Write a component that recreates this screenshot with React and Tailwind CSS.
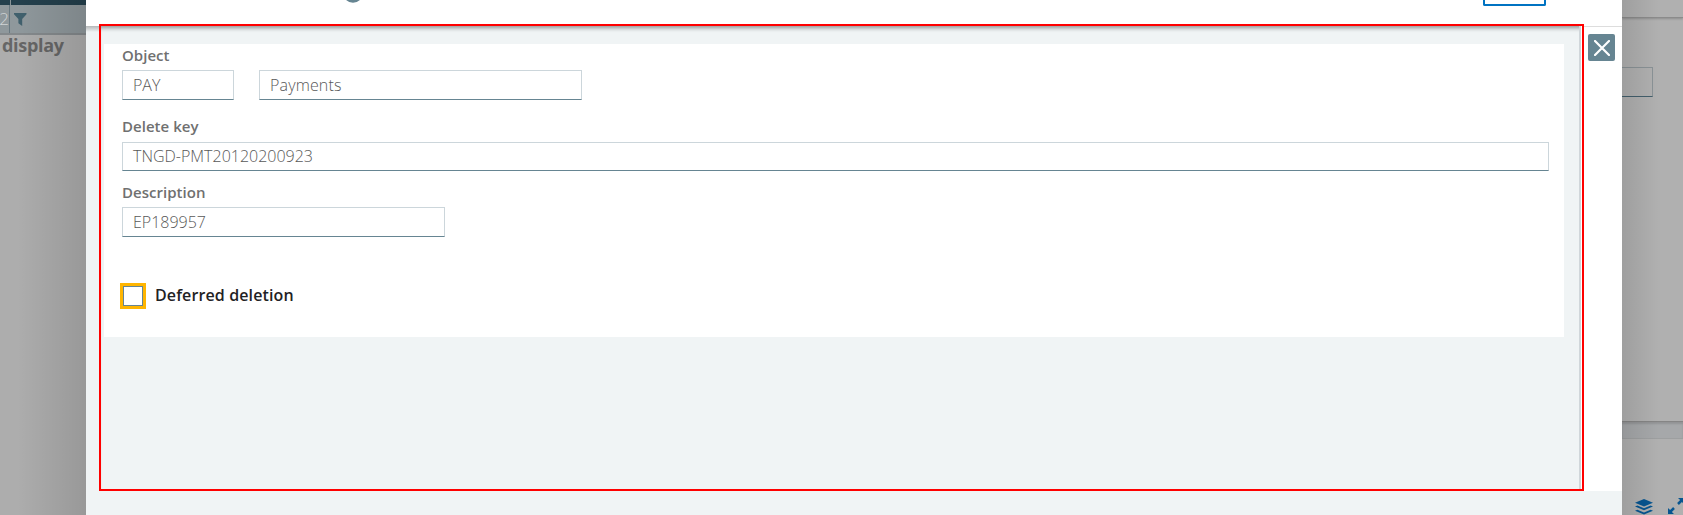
import React from "react";

function Field({ value, className }) {
  return (
    <div className={`flex items-center border border-[#ccd6db] border-b-[#668592] bg-white pl-[10px] text-[16px] font-light leading-none text-[#585858] ${className}`}>
      {value}
    </div>
  );
}

function Label({ children, className }) {
  return <div className={`h-5 text-[15px] font-semibold leading-5 tracking-[0.03px] text-[#707070] ${className}`}>{children}</div>;
}

function LeftBackdrop() {
  return (
    <div className="relative flex w-[86px] shrink-0 flex-col overflow-hidden bg-[#adadad]">
      <div className="flex h-[5px] bg-[#24404d]">
        <div className="ml-[10px] w-px bg-[#8a9599]" />
      </div>
      <div className="flex h-[30px] items-start border-b-2 border-[#84898c] bg-[#8f989c]">
        <div className="flex h-[28px] w-[10px] items-center justify-end overflow-hidden border-r border-[#687880] text-[17px] font-light text-[#d0d4d6]">2</div>
        <svg className="ml-1 mt-2 h-[13px] w-[13px]" viewBox="0 0 13 13">
          <path d="M0 0h12.5v1.3L8.2 6v7L4.4 10.3V6L0 1.3z" fill="#40606d" />
        </svg>
      </div>
      <div className="h-6 pl-0.5 text-[18px] font-bold leading-[20px] tracking-[-0.3px] text-[#666]">display</div>
      <div className="absolute inset-0 bg-gradient-to-r from-transparent from-20% to-black/12" />
    </div>
  );
}

function RightBackdrop() {
  return (
    <div className="relative flex w-[61px] shrink-0 flex-col overflow-hidden bg-[#b0b0b0]">
      <div className="h-[18px] border-b border-[#8b8b8b] shadow-[0_1px_2px_rgba(0,0,0,0.2)]" />
      <div className="mt-[49px] h-[30px] w-[31px] border border-l-0 border-[#8a9296] border-b-[#435f6c]" />
      <div className="mt-[324px] h-[18px] border-y border-t-[#858585] border-b-[#9d9fa0] bg-[#a6a8aa] shadow-[inset_0_2px_2px_rgba(0,0,0,0.12)]" />
      <div className="mt-[60px] flex pl-[13px]">
        <svg className="h-4 w-[18px] shrink-0" viewBox="0 0 18 16" fill="#075590">
          <path d="M9 0l9 3.7-9 3.7-9-3.7z" />
          <path d="M2.4 6.5L9 9.2l6.6-2.7L18 7.5l-9 3.7-9-3.7z" />
          <path d="M2.4 10.7L9 13.4l6.6-2.7L18 11.7l-9 3.7-9-3.7z" />
        </svg>
        <svg className="-mt-px ml-[15px] h-4 w-4 shrink-0" viewBox="0 0 16 16" fill="#075590">
          <path d="M10 0h6v6l-2.1-2.1-3 3-1.8-1.8 3-3zM0 10l2.1 2.1 3-3 1.8 1.8-3 3L6 16H0z" />
        </svg>
      </div>
      <div className="absolute inset-0 bg-gradient-to-l from-transparent from-40% to-black/10" />
    </div>
  );
}

export default function App() {
  return (
    <div className="flex h-[515px] w-[1683px] overflow-hidden font-['Open_Sans',sans-serif]">
      <LeftBackdrop />
      <main className="relative flex w-[1536px] shrink-0 flex-col bg-[#f0f4f5]">
        <header className="flex h-[26px] shrink-0 justify-between bg-white pl-[258px] pr-[76px]">
          <svg className="h-[3px] w-[18px]" viewBox="0 0 18 3">
            <circle cx="9" cy="-7.6" r="9" fill="none" stroke="#668592" strokeWidth="2.6" />
          </svg>
          <div className="h-[6px] w-[63px] rounded-b-[2px] border-2 border-t-0 border-[#0073c2]" />
        </header>
        <div className="relative -mt-0.5 flex h-[467px] shrink-0">
          <div className="mt-0.5 h-1.5 w-[13px] shrink-0 bg-gradient-to-b from-[#b4b7b8] to-[#f0f4f5]" />
          <section className="relative w-[1485px] shrink-0 border-2 border-[#f00] pl-[3px] pt-[18px] shadow-[inset_0_5px_4px_-3px_rgba(0,0,0,0.4)]">
            <div className="h-[293px] w-[1460px] bg-white pl-[18px] pt-px">
              <Label>Object</Label>
              <div className="mt-[5px] flex gap-[25px]">
                <Field value="PAY" className="h-[30px] w-[112px]" />
                <Field value="Payments" className="h-[30px] w-[323px] tracking-[0.15px]" />
              </div>
              <Label className="mt-4">Delete key</Label>
              <Field value="TNGD-PMT20120200923" className="mt-1.5 h-[29px] w-[1427px] pb-0.5" />
              <Label className="mt-[11px]">Description</Label>
              <Field value="EP189957" className="mt-[5px] h-[30px] w-[323px]" />
              <label className="-ml-0.5 mt-[46px] flex h-[26px] items-center gap-[9px] text-[16px] font-semibold tracking-[0.12px] text-[#1f2224]">
                <span className="h-[26px] w-[26px] border-[3px] border-[#ffb500]">
                  <span className="block h-5 w-5 border border-[#668592] bg-white" />
                </span>
                <span className="pb-0.5">Deferred deletion</span>
              </label>
            </div>
            <div className="absolute inset-y-0 right-0 w-[3px] border-l-2 border-[#d0d6da] bg-white" />
          </section>
          <aside className="mt-0.5 w-[38px] border-t border-[#ddd] bg-white pl-1 pt-[7px]">
            <button className="flex h-[27px] w-[27px] items-center justify-center rounded-[2px] bg-[#668592]">
              <svg className="h-4 w-4" viewBox="0 0 16 16" fill="none" stroke="white" strokeWidth="2.2" strokeLinecap="round">
                <path d="M1 1l14 14M15 1L1 15" />
              </svg>
            </button>
          </aside>
        </div>
      </main>
      <RightBackdrop />
    </div>
  );
}
